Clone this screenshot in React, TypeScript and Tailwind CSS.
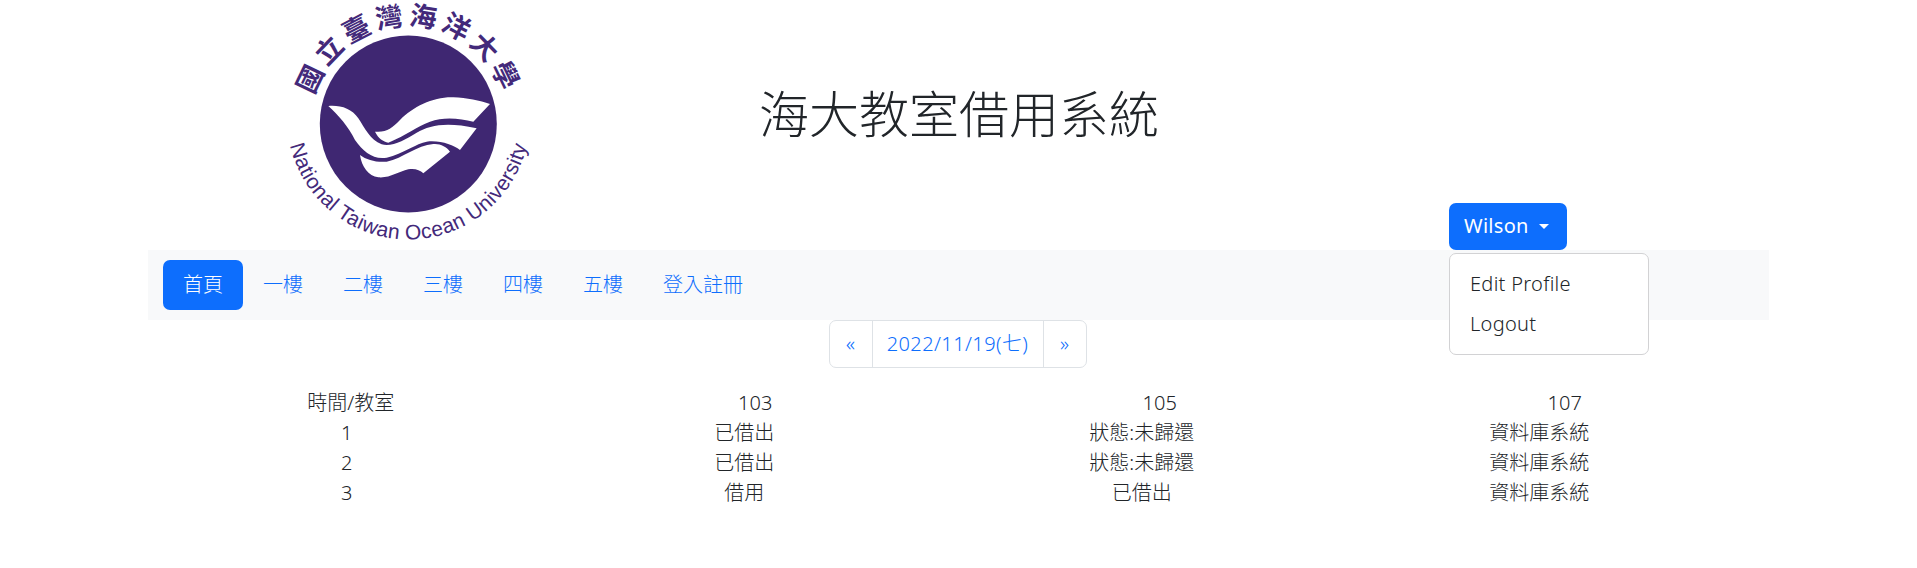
const rows = [
  ['1', '已借出', '狀態:未歸還', '資料庫系統'],
  ['2', '已借出', '狀態:未歸還', '資料庫系統'],
  ['3', '借用', '已借出', '資料庫系統'],
];

const floors = ['一樓', '二樓', '三樓', '四樓', '五樓', '登入註冊'];

function Logo() {
  return (
    <svg viewBox="0 0 300 250" className="w-[300px] h-[250px] block overflow-visible">
      <defs>
        <path id="topArc" d="M 50 124 A 98.5 98.5 0 0 1 247 124" />
        <path id="bottomArc" d="M 27 118 A 121.5 121.5 0 0 0 270 118" />
      </defs>
      <text fill="#43297a" fontSize="27" fontWeight="700" letterSpacing="4.5" textAnchor="middle" fontFamily="'Noto Sans CJK TC', serif">
        <textPath href="#topArc" startOffset="50%">國立臺灣海洋大學</textPath>
      </text>
      <text fill="#43297a" fontSize="21" textAnchor="middle" letterSpacing="0.4" fontFamily="'Liberation Sans', sans-serif">
        <textPath href="#bottomArc" startOffset="50%">National Taiwan Ocean University</textPath>
      </text>
      <circle cx="148.3" cy="124" r="88.5" fill="#3f2772" />
      <g transform="translate(60 90) scale(0.3333)" fill="#fff">
        <path d="M165 125 C200 128 215 115 240 90 C280 50 340 20 400 22 C440 24 480 32 510 42 L460 95 C420 85 370 80 330 95 C290 110 260 135 205 158 C190 155 175 145 165 125 Z" />
        <path d="M25 48 C60 45 95 55 115 85 C135 115 150 150 185 163 C215 172 255 150 290 128 C330 105 380 95 470 115 L420 180 C400 165 360 150 320 155 C290 160 250 190 200 203 C160 210 130 185 105 150 C85 110 55 75 25 48 Z" />
        <path d="M120 195 C140 210 170 218 200 215 C250 205 290 165 340 162 C360 160 380 170 390 185 L310 250 C300 240 285 235 265 238 C235 245 210 265 175 262 C145 258 125 230 120 195 Z" />
      </g>
    </svg>
  );
}

export default function App() {
  return (
    <div className="min-h-[568px] bg-white text-[#212529] text-[20px] font-light font-['Noto_Sans','Noto_Sans_CJK_TC',sans-serif]">
      <div className="mx-[148px]">
        <div className="flex h-[203px] items-start">
          <div className="w-[112px] shrink-0" />
          <Logo />
          <h1 className="ml-[199px] mt-[84px] text-[50px] leading-[1.2] font-light">海大教室借用系統</h1>
        </div>

        <div className="relative h-[47px] pl-[1301px]">
          <button className="flex h-[47px] w-[118px] items-center gap-[10px] rounded-[7px] bg-[#0d6efd] px-[15px] pb-[2px] text-white font-normal tracking-[0.3px]">
            Wilson
            <span className="mt-[2px] border-x-[5.5px] border-t-[5.5px] border-x-transparent border-t-white" />
          </button>
          <div className="absolute left-[1301px] top-[50px] z-10 w-[200px] h-[102px] rounded-[7px] border border-[#d2d2d4] bg-white py-[10px]">
            <div className="px-[20px] h-[40px] flex items-center tracking-[0.3px]">Edit Profile</div>
            <div className="px-[20px] h-[40px] flex items-center tracking-[0.3px]">Logout</div>
          </div>
        </div>

        <nav className="flex h-[70px] items-center bg-[#f8f9fa] px-[15px] text-[#0d6efd]">
          <a className="flex h-[50px] items-center rounded-[7px] bg-[#0d6efd] px-[20px] text-white">首頁</a>
          {floors.map((f) => (
            <a key={f} className="flex h-[50px] items-center px-[20px]">{f}</a>
          ))}
        </nav>

        <div className="flex justify-center pr-[2px]">
          <ul className="flex h-[48px] items-center rounded-[7px] border border-[#dee2e6] text-[#0d6efd]">
            <li className="flex h-full w-[42px] items-center justify-center">«</li>
            <li className="flex h-full w-[172px] items-center justify-center border-x border-[#dee2e6] tracking-[0.4px]">2022/11/19(七)</li>
            <li className="flex h-full w-[42px] items-center justify-center">»</li>
          </ul>
        </div>

        <table className="mt-[20px] w-[1590px] table-fixed text-center">
          <thead>
            <tr className="h-[29.5px]">
              <th className="pl-[8px] font-light">時間/教室</th>
              <th className="pl-[22px] font-light">103</th>
              <th className="pl-[36px] font-light">105</th>
              <th className="pl-[51px] font-light">107</th>
            </tr>
          </thead>
          <tbody>
            {rows.map((r) => (
              <tr key={r[0]} className="h-[29.5px]">
                {r.map((c, i) => (
                  <td key={i}>{c}</td>
                ))}
              </tr>
            ))}
          </tbody>
        </table>
      </div>
    </div>
  );
}
